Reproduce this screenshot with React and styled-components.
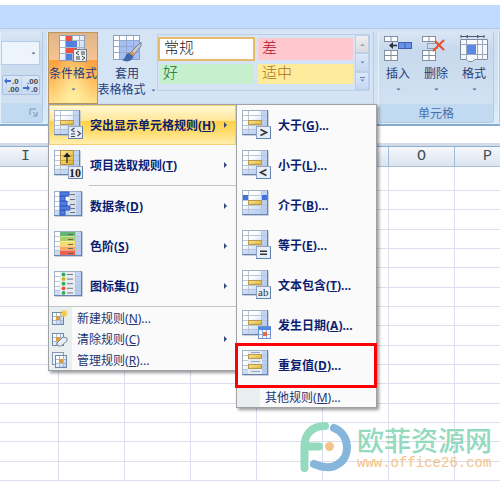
import React from 'react';
import styled, { createGlobalStyle, css } from 'styled-components';

const GlobalStyle = createGlobalStyle`
  * {
    box-sizing: border-box;
  }
  body {
    margin: 0;
    background: #fff;
    overflow: hidden;
    font-family: "Noto Sans", "Noto Sans CJK SC", sans-serif;
    font-size: 12px;
    color: #1f3f7a;
  }
  button, select {
    font: inherit;
    color: inherit;
    margin: 0;
    padding: 0;
    border: none;
    background: none;
  }
`;

const Page = styled.div`
  position: relative;
  min-height: 100vh;
  overflow: hidden;
`;

const TitleStrip = styled.header`
  height: 28px;
  border-top: 5px solid #fff;
  background: #bfdbff;
`;

const Ribbon = styled.div`
  display: flex;
  gap: 4px;
  padding: 2px 0 1px;
  height: 98px;
  background: linear-gradient(#d3e2f3, #cddff2 20%, #d6e6f6 80%, #dbf0fa);
  border-top: 1px solid #b3c9e4;
  border-bottom: 2px solid #8aabcf;
`;

const Group = styled.section`
  display: flex;
  flex-direction: column;
  flex: ${({ $grow }) => ($grow ? '1 1 0' : 'none')};
  width: ${({ $width }) => $width || 'auto'};
  border: 1px solid #b4cbe6;
  border-left-color: #e6f0fb;
  border-top-color: #d5e3f2;
  border-radius: 3px;
  background: linear-gradient(#d9e6f4, #c8d9ed 20%, #d5e4f4);
`;

const StylesGroup = styled(Group)`
  background: #d5e4f5;
`;

const GroupBody = styled.div`
  display: flex;
  flex: 1;
`;

const GroupLabel = styled.div`
  display: flex;
  justify-content: ${({ $end }) => ($end ? 'flex-end' : 'center')};
  align-items: center;
  height: 19px;
  padding-right: ${({ $end }) => ($end ? '4px' : '0')};
  background: #c1d9f1;
  color: #4a70b0;
`;

const NumberBody = styled.div`
  display: flex;
  flex-direction: column;
  gap: 10px;
  flex: 1;
  padding: 9px 2px 0 0;
`;

const SelectBox = styled.div`
  display: grid;
  align-items: center;
  border: 1px solid #b5cce8;
  background: #eef4fc;
  > * {
    grid-area: 1 / 1;
  }
  svg {
    justify-self: end;
    margin-right: 2px;
    pointer-events: none;
  }
`;

const FormatSelect = styled.select`
  width: 100%;
  height: 22px;
  appearance: none;
`;

const DecimalButtons = styled.div`
  display: flex;
  margin-left: 1px;
  height: 20px;
  border: 1px solid #a9c0de;
  border-radius: 2px;
  background: linear-gradient(#dae7f6, #c8daf0);
`;

const DecimalButton = styled.button`
  flex: 1;
  display: flex;
  align-items: center;
  justify-content: center;
  & + & {
    border-left: 1px solid #c0d3ea;
  }
`;

const BigButton = styled.button`
  display: flex;
  flex-direction: column;
  align-items: center;
  width: ${({ $width }) => $width};
  height: 72px;
  padding-top: 3px;
  line-height: 16px;
  white-space: nowrap;
  svg {
    flex: none;
  }
  ${({ $active }) =>
    $active &&
    css`
      border: 1px solid #b9975f;
      padding-top: 2px;
      background: radial-gradient(ellipse at 50% 100%, #fff0a0, transparent 60%),
        linear-gradient(#e0b488, #f6c491 38%, #fb9f3e 39%, #fdc468 75%, #ffdf8d);
    `}
`;

const ButtonText = styled.span`
  display: flex;
  align-items: center;
  gap: 4px;
  margin-top: ${({ $first }) => ($first ? '3px' : '0')};
  margin-bottom: ${({ $first, $tight }) => ($first && !$tight ? '4px' : '0')};
`;

const MenuAnchor = styled.div`
  position: relative;
`;

const Gallery = styled.div`
  display: flex;
  flex: 1;
  height: 57px;
  margin: 2px 3px 0 1px;
  border: 1px solid #bdd0e8;
`;

const Swatches = styled.div`
  flex: 1;
  display: grid;
  grid-template-columns: 1fr 1fr;
  grid-template-rows: 24px 22px;
  gap: 2px;
  padding: 2px 1px 0 0;
`;

const Swatch = styled.button`
  margin: 1px;
  padding: 0 0 4px 4px;
  text-align: left;
  font-family: "Noto Sans CJK SC", sans-serif;
  font-size: 15px;
  font-weight: 300;
  line-height: 16px;
  color: ${({ $color }) => $color};
  background: ${({ $bg }) => $bg};
  ${({ $selected }) =>
    $selected &&
    css`
      margin: 0;
      border: 2px solid #e7bc68;
    `}
`;

const ScrollColumn = styled.div`
  display: flex;
  flex-direction: column;
  width: 14px;
`;

const ScrollButton = styled.button`
  flex: 1;
  display: flex;
  align-items: center;
  justify-content: center;
  border: 1px solid #bccfe8;
  background: ${({ $off }) => ($off ? 'linear-gradient(#eee, #dcdcde)' : 'linear-gradient(#dce8f8, #c5d8f2)')};
`;

const MenuPanel = styled.div`
  position: absolute;
  z-index: 1;
  left: ${({ $sub }) => ($sub ? '187px' : '0')};
  top: ${({ $sub }) => ($sub ? '-1px' : '72px')};
  width: ${({ $sub }) => ($sub ? '141px' : '189px')};
  border: 1px solid #a0a2a6;
  background: #fafafa;
  box-shadow: 2px 2px 3px rgba(0, 0, 0, 0.4);
  color: #0c1e70;
`;

const MenuItem = styled.button`
  display: flex;
  align-items: center;
  width: 100%;
  height: 40px;
  padding: 0 8px 0 5px;
  font-weight: bold;
  white-space: nowrap;
  ${({ $hot }) =>
    $hot &&
    css`
      border: 1px solid #f2cf78;
      padding: 0 7px 0 4px;
      background: linear-gradient(#fff8d2, #ffe79a 38%, #ffd147 40%, #ffdb67 65%, #fff0b0);
    `}
`;

const ItemIcon = styled.span`
  display: flex;
  width: 36px;
`;

const ItemText = styled.span`
  flex: 1;
  text-align: left;
`;

const Divider = styled.div`
  height: 1px;
  margin-left: ${({ $inset }) => ($inset ? '40px' : '0')};
  background: #c5c5c5;
`;

const SmallItem = styled(MenuItem)`
  height: 21px;
  padding: 0 8px 0 0;
  font-weight: normal;
  color: #243575;
`;

const Gutter = styled.span`
  display: flex;
  align-items: center;
  justify-content: center;
  width: 23px;
  height: 100%;
  margin-right: 5px;
  padding-right: 2px;
  background: #e9eeee;
`;

const RedFrame = styled.div`
  position: absolute;
  left: -2px;
  right: -1px;
  bottom: 19px;
  height: 45px;
  border: 3px solid #fb0007;
  pointer-events: none;
`;

const FormulaBar = styled.div`
  height: 20px;
  background: #fff;
  border-bottom: 3px solid #d3dce6;
`;

const Sheet = styled.table`
  width: 528px;
  margin-left: -7px;
  table-layout: fixed;
  border-collapse: separate;
  border-spacing: 0;
`;

const ColumnHead = styled.th`
  height: 21px;
  padding: 0;
  border-top: 1px solid #8caed2;
  border-bottom: 1px solid #a9bdd5;
  border-right: 1px solid #a0bbda;
  background: linear-gradient(#f5f8fc, #dce4ee);
  font-family: "Liberation Mono", monospace;
  font-size: 15px;
  font-weight: normal;
  line-height: 18px;
  color: #444c55;
`;

const SheetRow = styled.tr`
  height: 19px;
  &:nth-child(3n) {
    height: 20px;
  }
  &:first-child {
    height: 24px;
  }
`;

const Cell = styled.td`
  padding: 0;
  border-right: 1px solid #dadeee;
  border-bottom: 1px solid #dadeee;
`;

const Watermark = styled.div`
  position: absolute;
  right: 8px;
  bottom: 8px;
  display: flex;
  gap: 6px;
  align-items: center;
`;

const WatermarkName = styled.div`
  font-family: "Noto Sans CJK SC", sans-serif;
  font-size: 27px;
  font-weight: 500;
  line-height: 32px;
  color: #94dabf;
`;

const WatermarkUrl = styled.div`
  font-family: "Liberation Mono", monospace;
  font-size: 14px;
  line-height: 14px;
  color: #f3c48a;
`;

const Down = ({ color = '#47699e', bar }) => (
  <svg width="7" height="7" viewBox="0 0 7 7" aria-hidden="true">
    {bar && <path d="M1 0.5h5" stroke={color} />}
    <path d="M1.5 2.500h4L3.500 4.500z" fill={color} />
  </svg>
);

const Up = () => (
  <svg width="7" height="7" viewBox="0 0 7 7" aria-hidden="true">
    <path d="M1 5h5L3.5 2.5z" fill="#a3a6aa" />
  </svg>
);

const Right = () => (
  <svg width="5" height="8" viewBox="0 0 5 8" aria-hidden="true">
    <path d="M1 1v6l3-3z" fill="#35477e" />
  </svg>
);

const IconPaints = () => (
  <svg width="0" height="0" style={{ display: 'block' }} aria-hidden="true">
    <defs>
      <linearGradient id="sheetFill" x1="0" y1="0" x2="1" y2="1">
        <stop offset="0.3" stopColor="#ffffff" />
        <stop offset="1" stopColor="#a9c4ef" />
      </linearGradient>
      <linearGradient id="goldFill" x1="0" y1="0" x2="1" y2="1">
        <stop offset="0" stopColor="#fbeaa0" />
        <stop offset="1" stopColor="#ddb02c" />
      </linearGradient>
    </defs>
  </svg>
);

// Small sheet shape shared by every rule icon, 26x25 at the origin
const SheetBase = ({ w = 25 }) => (
  <>
    <rect x="0.5" y="0.5" width={w} height="24" fill="url(#sheetFill)" stroke="#a3b1c6" />
    <rect x={w - 5} y="1" width="5" height="23" fill="#a9c4f1" opacity="0.6" />
    <rect x="1" y="19" width={w - 1} height="5" fill="#b7cef3" opacity="0.6" />
    <path d={`M1 5.5H${w}M1 10.5H${w}M1 15.5H${w}M1 19.5H${w}M6.5 1V24M${w - 5.5} 1V24`} stroke="#bcc5d4" />
    <path d={`M0 24.5H${w + 1}M${w + 0.5} 0V25`} stroke="#6583ae" />
    <path d={`M1 25.5H${w + 2}M${w + 1.5} 1V26`} stroke="#a8b4c4" opacity="0.6" />
  </>
);

const Badge = ({ children }) => (
  <>
    <rect x="14.5" y="16.5" width="14" height="12" fill="#e6eefb" stroke="#91a5c5" />
    <path d="M14 28.5H29M28.5 17V29" stroke="#6582ab" />
    {children}
  </>
);

const Gold = ({ y = 10 }) => (
  <rect x="6.5" y={y + 0.5} width="13" height="4" fill="url(#goldFill)" stroke="#b99a4c" />
);

const badges = {
  greater: <path d="M18.5 19.5l6 3-6 3" fill="none" stroke="#333" strokeWidth="1.6" />,
  less: <path d="M24.5 19.5l-6 3 6 3" fill="none" stroke="#333" strokeWidth="1.6" />,
  equal: <path d="M18 21.2h7M18 24.2h7" stroke="#333" strokeWidth="1.6" />,
  compare: <path d="M20.5 18l-3 2 3 2M17 24h4M17 26.5h4M23.5 21l3 2.500-3 2.500" fill="none" stroke="#444" strokeWidth="1.1" />,
  text: (
    <text x="16" y="26" fontFamily="Liberation Serif, serif" fontSize="11" fontWeight="normal" fill="#333">ab</text>
  ),
};

const RuleIcon = ({ kind }) => {
  const wide = ['bars', 'scale', 'set'].includes(kind);
  return (
    <svg width="30" height="30" viewBox="0 0 30 30" aria-hidden="true">
      <SheetBase w={wide ? 27 : 25} />
      {badges[kind] && (
        <>
          <Gold />
          <Badge>{badges[kind]}</Badge>
        </>
      )}
      {kind === 'top' && (
        <>
          <rect x="6.5" y="0.5" width="13" height="14" fill="url(#goldFill)" stroke="#b6923d" />
          <path d="M7 5.5h12M7 10.5h12" stroke="#cfa63d" />
          <path d="M13 13V5M10.500 6.500l2.500-3 2.500 3z" stroke="#222" strokeWidth="1.2" fill="#222" />
          <Badge>
            <text x="15" y="27" fontFamily="Liberation Serif, serif" fontSize="12" fontWeight="bold" fill="#222">10</text>
          </Badge>
        </>
      )}
      {kind === 'between' && (
        <>
          <path d="M1 5h5v5H1zM20 5h5v5h-5z" fill="#3f72dc" />
          <Gold />
        </>
      )}
      {kind === 'date' && (
        <>
          <Gold />
          <rect x="16.5" y="16.5" width="12" height="12" fill="#f3f6fd" stroke="#6f91cf" />
          <path d="M16 17h13v3H16z" fill="#5389e4" />
          <path d="M20.5 20v8M24.5 20v8M17 24.5h11" stroke="#94abd5" />
          <path d="M21 22h4v4h-4z" fill="#e56a4c" />
        </>
      )}
      {kind === 'duplicate' && (
        <>
          <path d="M6 1h14v23H6z" fill="#e5ebf4" />
          <path d="M9 2.5h9M9 11.5h9M9 21.5h9" stroke="#9ba8ba" />
          <Gold y={4} />
          <Gold y={14} />
        </>
      )}
      {kind === 'bars' && (
        <>
          <path d="M15 1h7v23h-7z" fill="#d9dfe8" />
          <path d="M6 1h9v4H6zM6 5h5v5H6zM6 10h7v5H6zM6 15h10v4H6zM6 19h5v5H6z" fill="#517ce0" stroke="#335bc0" />
          <path d="M16 3.5h5M16 8.5h5M16 13.5h5M17 17.5h4M16 21.5h5" stroke="#69727d" />
        </>
      )}
      {kind === 'scale' && (
        <>
          <path d="M6 1h15v4H6z" fill="#62b574" />
          <path d="M6 5h15v5H6z" fill="#a8cf65" />
          <path d="M6 10h15v5H6z" fill="#f3de69" />
          <path d="M6 15h15v4H6z" fill="#f7a961" />
          <path d="M6 19h15v5H6z" fill="#eb604e" />
          <path d="M6 5.5h15M6 10.5h15M6 15.5h15M6 19.5h15" stroke="#fff" opacity="0.4" />
          <path d="M14 3.5h5M14 8.5h5M14 13.5h5M14 17.5h5M14 22.5h5" stroke="#6f6550" />
        </>
      )}
      {kind === 'set' && (
        <>
          <path d="M6 1h15v23H6z" fill="#e8ecf1" />
          {['#2fae55', '#c0b91c', '#2fae55', '#ee4a3c', '#2fae55'].map((fill, i) => (
            <g key={i}>
              <circle cx="9.5" cy={3.5 + i * 4.6} r="1.9" fill={fill} />
              <path d={`M13 ${3.5 + i * 4.6}h6`} stroke="#757d86" />
            </g>
          ))}
        </>
      )}
    </svg>
  );
};

const SmallIcon = ({ kind }) => (
  <svg width="16" height="16" viewBox="0 0 16 16" aria-hidden="true">
    {kind === 'manage' && <rect x="0.5" y="0.5" width="11" height="12" fill="#eef3fa" stroke="#8396b3" />}
    <g transform={kind === 'manage' ? 'translate(3 3)' : 'translate(0 2)'}>
      <rect x="0.5" y="0.5" width="11" height="12" fill="url(#sheetFill)" stroke="#7388a8" />
      <path d="M1 4.5h10M1 8.5h10M4.5 1v11M8.5 1v11" stroke="#adbbcf" />
      <rect x="4" y="4" width="4" height="4" fill="#db9d3b" />
    </g>
    {kind === 'new' && <path d="M12 0v7M8.5 3.5h7M9.5 1l5 5M14.5 1l-5 5" stroke="#f5c83e" strokeWidth="1.4" />}
    {kind === 'clear' && <path d="M5 12l6-6 4 1v3l-6 5H6z" fill="#e9edf4" stroke="#7e8ba3" />}
  </svg>
);

const ConditionalIcon = () => (
  <svg width="28" height="28" viewBox="0 0 28 28" aria-hidden="true">
    <rect x="0.5" y="0.5" width="25" height="25" fill="url(#sheetFill)" stroke="#8fa1bd" />
    <path d="M1 5.5h24M1 12.5h24M1 18.5h24M6.5 1v24M13.5 1v24M20.5 1v24" stroke="#a7b5cb" />
    <path d="M7 1h6v5H7zM7 13h11v5H7z" fill="#ea5140" />
    <path d="M7 6h11v6H7zM7 19h6v6H7z" fill="#5380df" />
    <rect x="14.5" y="14.5" width="13" height="12" fill="#eceef3" stroke="#74808f" />
    <path d="M20 16l-3 2 3 2M22 17h4M22 19h4M17 22h4M17 24h4M23 21l3 2-3 2" fill="none" stroke="#444" />
  </svg>
);

const TableStyleIcon = () => (
  <svg width="30" height="28" viewBox="0 0 30 28" aria-hidden="true">
    <rect x="1.5" y="0.5" width="26" height="24" fill="#fff" stroke="#8fa1bd" />
    <path d="M8 6h19v18H8z" fill="#a3bff5" />
    <path d="M2 5.5h25M2 11.5h25M2 17.5h25M7.5 1v23M14.5 1v23M21.5 1v23" stroke="#94a8cc" />
    <path d="M29 7L18 18l3 3 8-10z" fill="#c9cdd2" stroke="#777e88" />
    <path d="M20 16l-3 3 3 3 3-4z" fill="#d79854" />
    <path d="M17 18c-4 0-3 6-7 7 5 3 11 1 11-4z" fill="#4168ab" />
  </svg>
);

const Block = ({ x, y, blue }) => (
  <>
    <rect x={x + 0.5} y={y + 0.5} width="13" height={blue ? 6 : 5} fill={blue ? '#6a93e8' : '#fff'} stroke={blue ? '#3d62ab' : '#818fa5'} />
    <path d={`M${x + 7} ${y}v6`} stroke={blue ? '#3d62ab' : '#818fa5'} />
  </>
);

const CellsIcon = ({ kind }) => (
  <svg width="30" height="28" viewBox="0 0 30 28" aria-hidden="true">
    {kind === 'format' ? (
      <>
        <path d="M2 0v3M25 0v3M2 1.5h23M9 0l-2 1.500 2 1.500M18 0l2 1.500-2 1.500" stroke="#4e5969" fill="none" />
        <path d="M1.5 4.5h27v20h-13l-2 2h-4l-2-2h-6z" fill="#f5f8fd" stroke="#7c8ca5" />
        <path d="M2 9.5h26M2 19.5h26M7.5 5v20M18.5 5v20M23.5 5v20" stroke="#9aa8bd" />
        <path d="M8 10h9v9H8z" fill="#5b88e5" />
      </>
    ) : (
      <>
        <Block x={1} y={1} />
        <Block x={1} y={15} />
        <Block x={1} y={20} />
        {kind === 'insert' ? (
          <>
            <Block x={15} y={7} blue />
            <path d="M14 10.5H8" stroke="#2b3039" strokeWidth="1.6" />
            <path d="M10 7l-4 3.5 4 3.5z" fill="#2b3039" />
          </>
        ) : (
          <>
            <rect x="6.5" y="8.5" width="10" height="5" fill="none" stroke="#56606f" strokeDasharray="1 1" />
            <path d="M14 6l9 9M23 5L12 16" stroke="#ea4e2b" strokeWidth="2" />
          </>
        )}
      </>
    )}
  </svg>
);

const DecimalIcon = ({ less }) => (
  <svg width="17" height="16" viewBox="0 0 17 16" aria-hidden="true">
    <g fontFamily="Liberation Sans, sans-serif" fontSize="8" fontWeight="bold" fill="#44474c">
      <text x={less ? 5 : 9} y="7">{less ? '.00' : '.0'}</text>
      <text x={less ? 9 : 5} y="15">{less ? '.0' : '.00'}</text>
    </g>
    <path d={less ? 'M8 11L5 8v2H1v2h4v2z' : 'M1 4l3-3v2h4v2H4v2z'} fill="#3f6fc4" />
  </svg>
);

const LauncherIcon = () => (
  <svg width="9" height="9" viewBox="0 0 9 9" aria-hidden="true">
    <path d="M1 7V1h6M4 4l3 3M8 4v4H4" stroke="#7893bc" fill="none" />
  </svg>
);

const Logo = () => (
  <svg width="51" height="52" viewBox="0 0 51 52" aria-hidden="true">
    <path d="M4.5 47V25C4.5 13 12 5 25 5M5 25.5H19" fill="none" stroke="#94dabf" strokeWidth="8" strokeLinecap="round" />
    <path d="M34 7C50 13 51 36 38 43C32 48 24 47 14 43" fill="none" stroke="#87b6dc" strokeWidth="8" strokeLinecap="round" />
    <circle cx="29.5" cy="25.5" r="4.5" fill="#f3c48a" />
  </svg>
);

const mainItems = [
  { kind: 'compare', label: '突出显示单元格规则', hotkey: 'H', hot: true },
  { kind: 'top', label: '项目选取规则', hotkey: 'T', divider: true },
  { kind: 'bars', label: '数据条', hotkey: 'D' },
  { kind: 'scale', label: '色阶', hotkey: 'S' },
  { kind: 'set', label: '图标集', hotkey: 'I' },
];

const manageItems = [
  { kind: 'new', label: '新建规则', hotkey: 'N', tail: '...' },
  { kind: 'clear', label: '清除规则', hotkey: 'C', arrow: true },
  { kind: 'manage', label: '管理规则', hotkey: 'R', tail: '...' },
];

const ruleItems = [
  { kind: 'greater', label: '大于', hotkey: 'G' },
  { kind: 'less', label: '小于', hotkey: 'L' },
  { kind: 'between', label: '介于', hotkey: 'B' },
  { kind: 'equal', label: '等于', hotkey: 'E' },
  { kind: 'text', label: '文本包含', hotkey: 'T' },
  { kind: 'date', label: '发生日期', hotkey: 'A' },
  { kind: 'duplicate', label: '重复值', hotkey: 'D' },
];

// the columns under the open menus carry no letter
const columns = ['I', '', '', '', '', '', 'O', 'P'];
const rows = Array.from({ length: 16 }, (_, i) => i);

const Label = ({ label, hotkey, tail }) => (
  <ItemText>
    {label}(<u>{hotkey}</u>){tail}
  </ItemText>
);

const RulesSubmenu = () => (
  <MenuPanel $sub role="menu">
    {ruleItems.map((item) => (
      <MenuItem key={item.kind} role="menuitem">
        <ItemIcon><RuleIcon kind={item.kind} /></ItemIcon>
        <Label {...item} tail="..." />
      </MenuItem>
    ))}
    <Divider />
    <SmallItem role="menuitem">
      <Gutter />
      <Label label="其他规则" hotkey="M" tail="..." />
    </SmallItem>
    <RedFrame />
  </MenuPanel>
);

const ConditionalMenu = () => (
  <MenuPanel role="menu">
    {mainItems.map((item) => (
      <React.Fragment key={item.kind}>
        <MenuItem $hot={item.hot} role="menuitem">
          <ItemIcon><RuleIcon kind={item.kind} /></ItemIcon>
          <Label {...item} />
          <Right />
        </MenuItem>
        {item.divider && <Divider $inset />}
      </React.Fragment>
    ))}
    <Divider />
    {manageItems.map((item) => (
      <SmallItem key={item.kind} role="menuitem">
        <Gutter><SmallIcon kind={item.kind} /></Gutter>
        <Label {...item} />
        {item.arrow && <Right />}
      </SmallItem>
    ))}
    <RulesSubmenu />
  </MenuPanel>
);

const App = () => {
  return (
    <Page>
      <GlobalStyle />
      <IconPaints />
      <TitleStrip />
      <Ribbon>
        <Group $width="43px">
          <NumberBody>
            <SelectBox>
              <FormatSelect aria-label="数字格式" />
              <Down />
            </SelectBox>
            <DecimalButtons>
              <DecimalButton aria-label="增加小数位数"><DecimalIcon /></DecimalButton>
              <DecimalButton aria-label="减少小数位数"><DecimalIcon less /></DecimalButton>
            </DecimalButtons>
          </NumberBody>
          <GroupLabel $end><LauncherIcon /></GroupLabel>
        </Group>

        <StylesGroup $grow>
          <GroupBody>
            <MenuAnchor>
              <BigButton $width="50px" $active aria-haspopup="menu">
                <ConditionalIcon />
                <ButtonText $first>条件格式</ButtonText>
                <Down />
              </BigButton>
              <ConditionalMenu />
            </MenuAnchor>
            <BigButton $width="58px">
              <TableStyleIcon />
              <ButtonText $first $tight>套用</ButtonText>
              <ButtonText>表格格式<Down /></ButtonText>
            </BigButton>
            <Gallery>
              <Swatches>
                <Swatch $selected $bg="#fff" $color="#222">常规</Swatch>
                <Swatch $bg="#ffc7ce" $color="#b3122a">差</Swatch>
                <Swatch $bg="#c6efce" $color="#17701f">好</Swatch>
                <Swatch $bg="#ffeb9c" $color="#a87414">适中</Swatch>
              </Swatches>
              <ScrollColumn>
                <ScrollButton $off aria-label="上一行"><Up /></ScrollButton>
                <ScrollButton aria-label="下一行"><Down color="#6284bd" /></ScrollButton>
                <ScrollButton aria-label="其他"><Down color="#6284bd" bar /></ScrollButton>
              </ScrollColumn>
            </Gallery>
          </GroupBody>
        </StylesGroup>

        <Group $width="116px">
          <GroupBody>
            <BigButton $width="38px">
              <CellsIcon kind="insert" />
              <ButtonText $first>插入</ButtonText>
              <Down />
            </BigButton>
            <BigButton $width="38px">
              <CellsIcon kind="delete" />
              <ButtonText $first>删除</ButtonText>
              <Down />
            </BigButton>
            <BigButton $width="38px">
              <CellsIcon kind="format" />
              <ButtonText $first>格式</ButtonText>
              <Down />
            </BigButton>
          </GroupBody>
          <GroupLabel>单元格</GroupLabel>
        </Group>
        <Group $width="2px" />
      </Ribbon>
      <FormulaBar />
      <Sheet>
        <thead>
          <tr>
            {columns.map((name, i) => (
              <ColumnHead key={i} scope="col">{name}</ColumnHead>
            ))}
          </tr>
        </thead>
        <tbody>
          {rows.map((row) => (
            <SheetRow key={row}>
              {columns.map((name, i) => (
                <Cell key={i} />
              ))}
            </SheetRow>
          ))}
        </tbody>
      </Sheet>
      <Watermark>
        <Logo />
        <div>
          <WatermarkName>欧菲资源网</WatermarkName>
          <WatermarkUrl>www.office26.com</WatermarkUrl>
        </div>
      </Watermark>
    </Page>
  );
};

export default App;
